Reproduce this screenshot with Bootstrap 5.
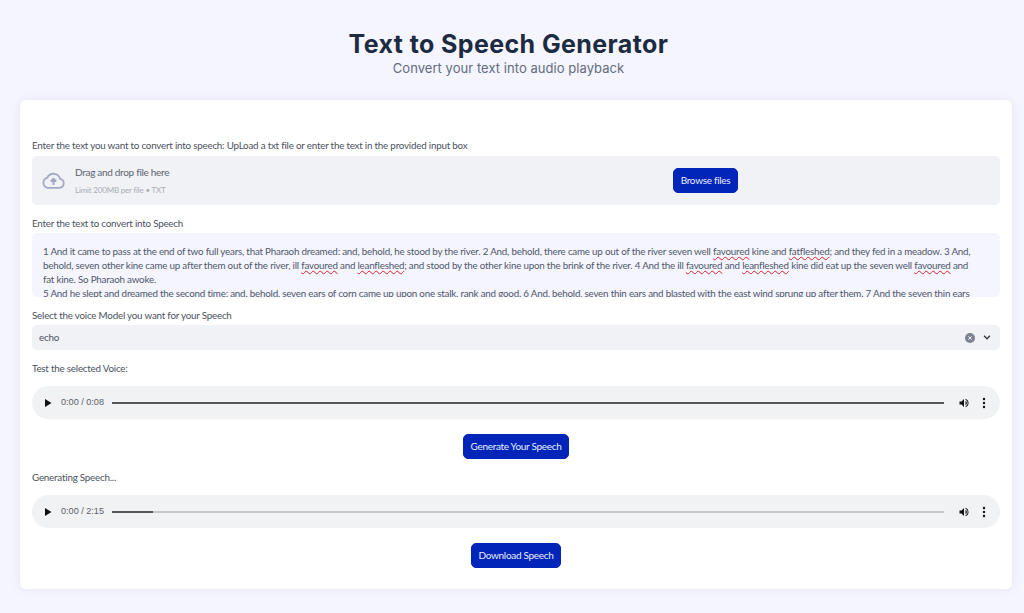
<!DOCTYPE html>
<html lang="en">
<head>
<meta charset="utf-8">
<title>Text to Speech Generator</title>
<link href="https://cdn.jsdelivr.net/npm/bootstrap@5.3.0/dist/css/bootstrap.min.css" rel="stylesheet">
<style>
html,body{height:613px;overflow:hidden}
body{background:#f4f5fe;font-family:"Lato","Liberation Sans",sans-serif;color:#4b5160;font-size:9.8px;letter-spacing:-.21px}
.hero-box{height:100px;padding:29px 7px 0 0}
.hero-title{font-family:"Inter","Liberation Sans",sans-serif;font-weight:700;font-size:25px;line-height:30px;color:#1c2b41;margin:0;letter-spacing:.4px}
.hero-sub{font-family:"Inter","Liberation Sans",sans-serif;font-size:13px;line-height:18px;color:#626b80;letter-spacing:.05px}
.sheet{width:992px;height:489px;margin-left:20px;background:#fff;border-radius:6px;box-shadow:0 0 10px rgba(120,125,170,.12);padding:38px 12px 0}
.lbl{line-height:14px;height:14px}
.drop{height:49px;background:#f0f2f6;border-radius:5px;margin-top:4px;padding-left:9px}
.cloud{width:25px;height:25px;color:#a3a8c6}
.drop-info{margin-left:9px}
.drop-main{font-size:10px;line-height:13px;color:#5c6270;letter-spacing:-.3px}
.drop-sub{font-size:8px;line-height:12px;color:#a9adb6;margin-top:5px;letter-spacing:-.19px}
.drop-left{width:632px}
.act{background:#0025b8;border:1px solid #0025b8;color:#e9edff;font-size:10px;border-radius:5px;height:25px;padding:0;line-height:23px;letter-spacing:-.3px}
.act:hover{background:#0025b8;color:#e9edff}
.w-browse{width:65px}
.w-gen{width:106px}
.w-dl{width:90px}
.txtbox{height:64px;background:#f4f5fe;border-radius:5px;margin-top:3px;padding:11px 11px 0;overflow:hidden;white-space:nowrap;line-height:14px;color:#50576a}
.sp{text-decoration:underline wavy #d8232a 1px;text-underline-offset:1px}
.sel{height:25px;background:#f0f2f6;border-radius:5px;margin-top:3px;padding:0 9px 0 7px}
.player{height:33px;background:#f0f2f4;border-radius:17px;padding:0 14px 0 12px;color:#5d6168;font-size:9.1px;font-family:"Liberation Sans",sans-serif;letter-spacing:0}
.ptime{margin-left:9px}
.track{height:2px;background:#c5c7c9;margin:0 14px 0 8px;position:relative}
.track-fill{position:absolute;left:0;top:0;height:2px;background:#55585c}
.mt-b{margin-top:11px}
.mt-d{margin-top:15px}
.dots{margin-left:12px}
.fill-part{width:4.9%}
</style>
</head>
<body>
<header class="hero-box text-center">
  <h1 class="hero-title">Text to Speech Generator</h1>
  <div class="hero-sub">Convert your text into audio playback</div>
</header>
<main class="sheet">
  <div class="lbl">Enter the text you want to convert into speech: UpLoad a txt file or enter the text in the provided input box</div>
  <div class="drop d-flex align-items-center">
    <div class="drop-left d-flex align-items-center">
      <svg class="cloud flex-shrink-0" viewBox="0 0 24 24" fill="none" stroke="currentColor" stroke-width="1.7" stroke-linejoin="round"><path d="M6.5 19h11.2a4.3 4.3 0 0 0 .7-8.5A6.6 6.6 0 0 0 6 9.4 4.9 4.9 0 0 0 6.5 19z"/><path d="M12 16.2v-5.4M9.4 13l2.6-2.7 2.6 2.7" stroke-width="1.9"/></svg>
      <div class="drop-info">
        <div class="drop-main">Drag and drop file here</div>
        <div class="drop-sub">Limit 200MB per file • TXT</div>
      </div>
    </div>
    <button class="btn act w-browse" type="button">Browse files</button>
  </div>
  <div class="lbl mt-b">Enter the text to convert into Speech</div>
  <div class="txtbox">1 And it came to pass at the end of two full years, that Pharaoh dreamed: and, behold, he stood by the river. 2 And, behold, there came up out of the river seven well <span class="sp">favoured</span> kine and <span class="sp">fatfleshed</span>; and they fed in a meadow. 3 And,<br>behold, seven other kine came up after them out of the river, ill <span class="sp">favoured</span> and <span class="sp">leanfleshed</span>; and stood by the other kine upon the brink of the river. 4 And the ill <span class="sp">favoured</span> and <span class="sp">leanfleshed</span> kine did eat up the seven well <span class="sp">favoured</span> and<br>fat kine. So Pharaoh awoke.<br>5 And he slept and dreamed the second time: and, behold, seven ears of corn came up upon one stalk, rank and good. 6 And, behold, seven thin ears and blasted with the east wind sprung up after them. 7 And the seven thin ears</div>
  <div class="lbl mt-b">Select the voice Model you want for your Speech</div>
  <div class="sel d-flex align-items-center justify-content-between">
    <span>echo</span>
    <span class="d-flex align-items-center gap-2">
      <svg width="10" height="10" viewBox="0 0 10 10"><circle cx="5" cy="5" r="5" fill="#7c8190"/><path d="M3.3 3.3l3.4 3.4M6.7 3.3l-3.4 3.4" stroke="#f0f2f6" stroke-width="1"/></svg>
      <svg width="8" height="5" viewBox="0 0 9 6" fill="none"><path d="M1 1l3.5 3.5L8 1" stroke="#33363d" stroke-width="1.6"/></svg>
    </span>
  </div>
  <div class="lbl mt-b">Test the selected Voice:</div>
  <div class="player d-flex align-items-center mt-b">
    <svg width="8" height="8" viewBox="0 0 8 8" class="flex-shrink-0"><path d="M1 0l6.5 4L1 8z" fill="#111"/></svg>
    <span class="ptime">0:00 / 0:08</span>
    <div class="track flex-grow-1"><div class="track-fill w-100"></div></div>
    <svg width="12" height="12" viewBox="0 0 24 24" class="flex-shrink-0"><path d="M3 9v6h4l5 5V4L7 9zM15 7.5v9a5 5 0 0 0 0-9z" fill="#111"/><path d="M15 3.5v2a7 7 0 0 1 0 13v2a9 9 0 0 0 0-17z" fill="#111"/></svg>
    <svg width="4" height="12" viewBox="0 0 4 12" class="flex-shrink-0 dots"><circle cx="2" cy="2" r="1.2" fill="#111"/><circle cx="2" cy="6" r="1.2" fill="#111"/><circle cx="2" cy="10" r="1.2" fill="#111"/></svg>
  </div>
  <div class="text-center mt-d"><button class="btn act w-gen" type="button">Generate Your Speech</button></div>
  <div class="lbl mt-b">Generating Speech...</div>
  <div class="player d-flex align-items-center mt-b">
    <svg width="8" height="8" viewBox="0 0 8 8" class="flex-shrink-0"><path d="M1 0l6.5 4L1 8z" fill="#111"/></svg>
    <span class="ptime">0:00 / 2:15</span>
    <div class="track flex-grow-1"><div class="track-fill fill-part"></div></div>
    <svg width="12" height="12" viewBox="0 0 24 24" class="flex-shrink-0"><path d="M3 9v6h4l5 5V4L7 9zM15 7.5v9a5 5 0 0 0 0-9z" fill="#111"/><path d="M15 3.5v2a7 7 0 0 1 0 13v2a9 9 0 0 0 0-17z" fill="#111"/></svg>
    <svg width="4" height="12" viewBox="0 0 4 12" class="flex-shrink-0 dots"><circle cx="2" cy="2" r="1.2" fill="#111"/><circle cx="2" cy="6" r="1.2" fill="#111"/><circle cx="2" cy="10" r="1.2" fill="#111"/></svg>
  </div>
  <div class="text-center mt-d"><button class="btn act w-dl" type="button">Download Speech</button></div>
</main>
<script src="https://cdn.jsdelivr.net/npm/bootstrap@5.3.0/dist/js/bootstrap.bundle.min.js"></script>
</body>
</html>
